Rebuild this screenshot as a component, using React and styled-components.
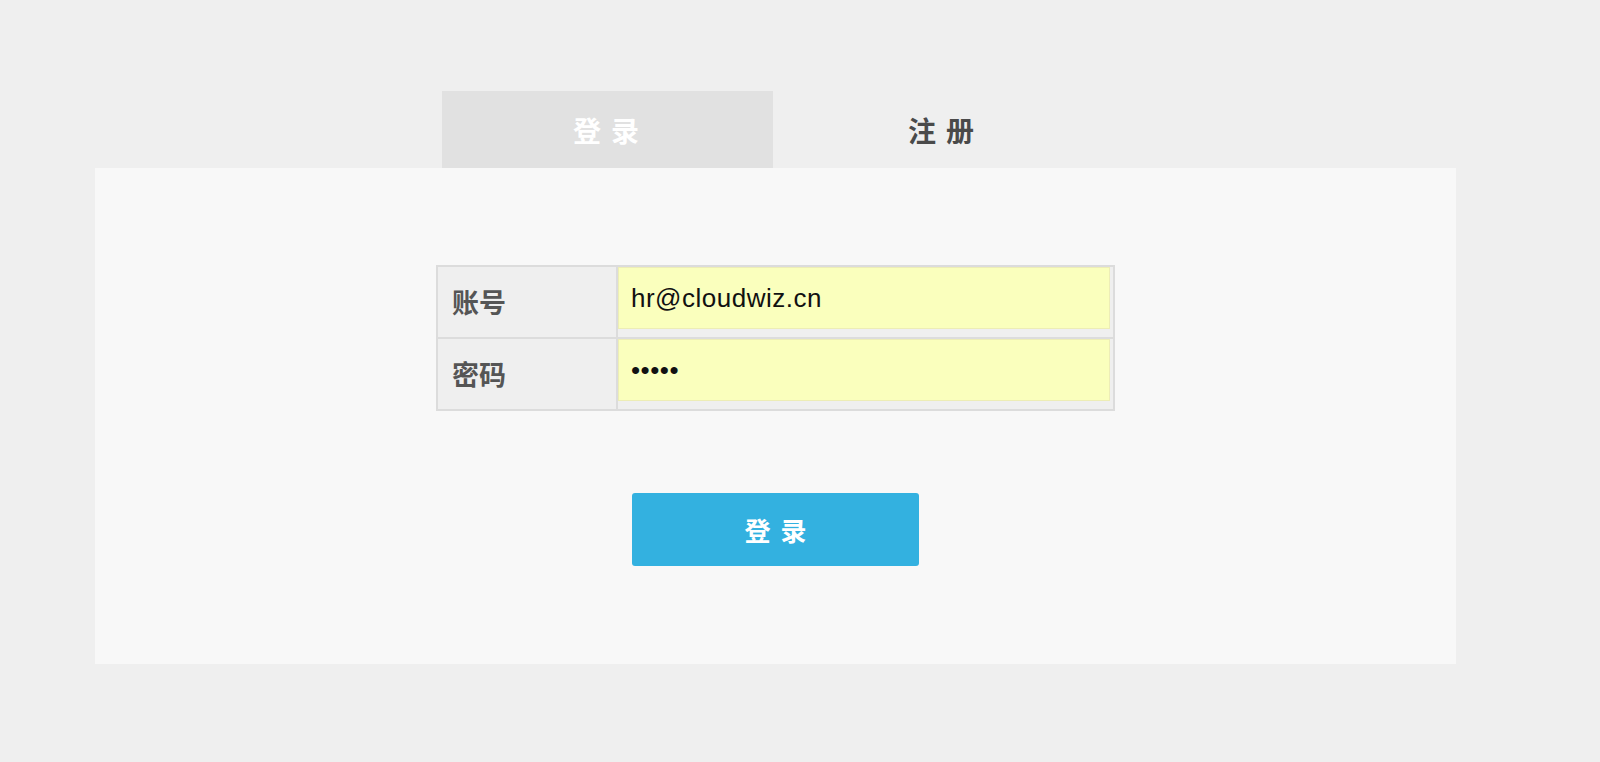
import React, { useState } from "react";
import styled, { createGlobalStyle } from "styled-components";

const GlobalStyle = createGlobalStyle`
	html, body {
		margin: 0;
		padding: 0;
		background: #efefef;
		font-family: "Liberation Sans", "Noto Sans CJK SC", sans-serif;
	}
`;

const Page = styled.div`
	min-height: 762px;
	padding-top: 91px;
	box-sizing: border-box;
`;

const Wrapper = styled.section`
	width: 1361px;
	margin-left: 95px;
	display: flex;
	flex-direction: column;
`;

const TabBar = styled.div`
	display: flex;
	justify-content: center;
	padding-right: 6px;
`;

const Tab = styled.button`
	width: 331px;
	height: 77px;
	border: none;
	outline: none;
	cursor: pointer;
	padding: 0 0 0 ${(p) => (p.$active ? 8 : 16)}px;
	background: ${(p) => (p.$active ? "#e1e1e1" : "transparent")};
	color: ${(p) => (p.$active ? "#ffffff" : "#4a4a4a")};
	font-family: "Noto Sans CJK SC", sans-serif;
	font-size: 28px;
	font-weight: 700;
	letter-spacing: 10px;
`;

const Panel = styled.div`
	background: #f8f8f8;
	height: 496px;
	box-sizing: border-box;
	padding-top: 97px;
	display: flex;
	flex-direction: column;
	align-items: center;
`;

const FormTable = styled.table`
	width: 679px;
	border-collapse: collapse;
	border: 2px solid #dcdcdc;

	td {
		border: 2px solid #dcdcdc;
		background: #efefef;
		padding: 0;
	}
`;

const Label = styled.td`
	width: 164px;
	padding-left: 14px !important;
	font-family: "Noto Sans CJK SC", sans-serif;
	font-size: 27px;
	font-weight: 600;
	line-height: 1.2;
	color: #555;
	vertical-align: middle;
`;

const InputCell = styled.td`
	padding: 0 3px 8px 0 !important;
	height: 62px;
	vertical-align: top;
`;

const Field = styled.input`
	display: block;
	width: 100%;
	height: 62px;
	box-sizing: border-box;
	margin: 0;
	padding: 0 12px;
	border: 1px solid #ededb6;
	background: #faffbd;
	outline: none;
	font-family: "Liberation Sans", Arial, sans-serif;
	font-size: 26px;
	letter-spacing: 0.5px;
	color: #111;
`;

const SubmitButton = styled.button`
	margin-top: 82px;
	width: 287px;
	height: 73px;
	border: none;
	border-radius: 3px;
	background: #33b1e0;
	color: #fff;
	cursor: pointer;
	padding: 0 0 0 10px;
	font-family: "Noto Sans CJK SC", sans-serif;
	font-size: 26px;
	font-weight: 700;
	letter-spacing: 10px;
`;

const App = () => {
	const [tab, setTab] = useState("login");
	const [account, setAccount] = useState("hr@cloudwiz.cn");
	const [password, setPassword] = useState("12345");

	return (
		<Page>
			<GlobalStyle />
			<Wrapper>
				<TabBar>
					<Tab $active={tab === "login"} onClick={() => setTab("login")}>
						登录
					</Tab>
					<Tab $active={tab === "register"} onClick={() => setTab("register")}>
						注册
					</Tab>
				</TabBar>
				<Panel>
					<FormTable>
						<tbody>
							<tr>
								<Label>账号</Label>
								<InputCell>
									<Field
										type='text'
										value={account}
										onChange={(e) => setAccount(e.target.value)}
									/>
								</InputCell>
							</tr>
							<tr>
								<Label>密码</Label>
								<InputCell>
									<Field
										type='password'
										value={password}
										onChange={(e) => setPassword(e.target.value)}
									/>
								</InputCell>
							</tr>
						</tbody>
					</FormTable>
					<SubmitButton>登录</SubmitButton>
				</Panel>
			</Wrapper>
		</Page>
	);
};

export default App;
